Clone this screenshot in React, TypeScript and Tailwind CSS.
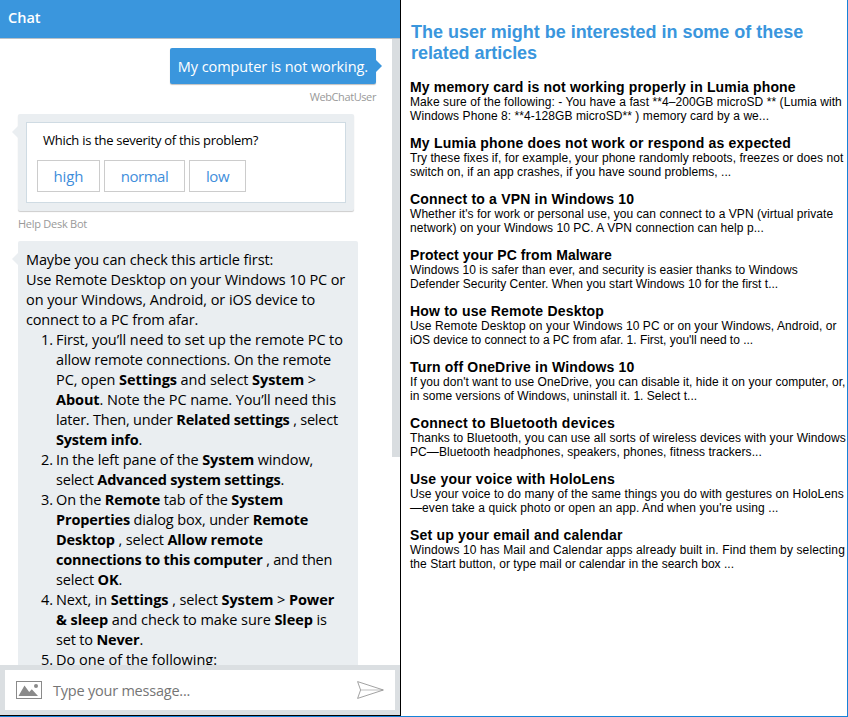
import type { ReactNode } from "react";

function Line({ t, children }: { t: string; children: ReactNode }) {
  return <div className={`whitespace-pre ${t}`}>{children}</div>;
}

function Step({ n, children }: { n: number; children: ReactNode }) {
  return (
    <li className="flex">
      <span className="w-[30px] shrink-0 pr-[3px] text-right">{n}.</span>
      <div>{children}</div>
    </li>
  );
}

const articles = [
  {
    title: "My memory card is not working properly in Lumia phone",
    track: "tracking-[0.16px]",
    lines: [
      ["Make sure of the following: - You have a fast **4–200GB microSD ** (Lumia with", "tracking-[0.08px]"],
      ["Windows Phone 8: **4-128GB microSD** ) memory card by a we...", "tracking-[0.07px]"],
    ],
  },
  {
    title: "My Lumia phone does not work or respond as expected",
    track: "tracking-[0.21px]",
    lines: [
      ["Try these fixes if, for example, your phone randomly reboots, freezes or does not", "tracking-[0.06px]"],
      ["switch on, if an app crashes, if you have sound problems, ...", "tracking-[0.05px]"],
    ],
  },
  {
    title: "Connect to a VPN in Windows 10",
    track: "tracking-[0.19px]",
    lines: [
      ["Whether it's for work or personal use, you can connect to a VPN (virtual private", "tracking-[0.05px]"],
      ["network) on your Windows 10 PC. A VPN connection can help p...", "tracking-[0.07px]"],
    ],
  },
  {
    title: "Protect your PC from Malware",
    track: "tracking-[0.07px]",
    lines: [
      ["Windows 10 is safer than ever, and security is easier thanks to Windows", "tracking-[0.06px]"],
      ["Defender Security Center. When you start Windows 10 for the first t...", "tracking-[0.01px]"],
    ],
  },
  {
    title: "How to use Remote Desktop",
    track: "tracking-[0.2px]",
    lines: [
      ["Use Remote Desktop on your Windows 10 PC or on your Windows, Android, or", "tracking-[0.09px]"],
      ["iOS device to connect to a PC from afar. 1. First, you'll need to ...", "tracking-[-0.02px]"],
    ],
  },
  {
    title: "Turn off OneDrive in Windows 10",
    track: "tracking-[0.18px]",
    lines: [
      ["If you don't want to use OneDrive, you can disable it, hide it on your computer, or,", "tracking-[0.05px]"],
      ["in some versions of Windows, uninstall it. 1. Select t...", "tracking-[0.03px]"],
    ],
  },
  {
    title: "Connect to Bluetooth devices",
    track: "tracking-[0.27px]",
    lines: [
      ["Thanks to Bluetooth, you can use all sorts of wireless devices with your Windows", "tracking-[0.07px]"],
      ["PC—Bluetooth headphones, speakers, phones, fitness trackers...", "tracking-[0.07px]"],
    ],
  },
  {
    title: "Use your voice with HoloLens",
    track: "tracking-[0.21px]",
    lines: [
      ["Use your voice to do many of the same things you do with gestures on HoloLens", "tracking-[0.08px]"],
      ["—even take a quick photo or open an app. And when you're using ...", "tracking-[0.08px]"],
    ],
  },
  {
    title: "Set up your email and calendar",
    track: "tracking-[0.19px]",
    lines: [
      ["Windows 10 has Mail and Calendar apps already built in. Find them by selecting", "tracking-[0.12px]"],
      ["the Start button, or type mail or calendar in the search box ...", "tracking-[0.03px]"],
    ],
  },
];

function ChatPanel() {
  return (
    <section className="flex w-[401px] shrink-0 flex-col border-r border-b border-black font-['Open_Sans',sans-serif]">
      <header className="flex h-[39px] shrink-0 items-center border-b border-[#b9c0c6] bg-[#3a96dd] px-2 pb-[2px] text-[14.5px] font-semibold text-white">
        Chat
      </header>

      <div className="flex min-h-0 flex-1 overflow-hidden">
        <div className="flex w-[392px] shrink-0 flex-col pt-[9px] pl-[18px] pr-4 text-[14.5px] leading-[20px]">
          <div className="relative self-end rounded-[2px] bg-[#3a96dd] px-2 pt-[9px] pb-[7px] whitespace-nowrap text-white tracking-[-0.09px] shadow-[0_1px_1px_rgba(0,0,0,0.25)]">
            My computer is not working.
            <svg className="absolute top-[12px] -right-[6px]" width="6" height="12" viewBox="0 0 6 12">
              <path d="M0 0L6 6L0 12Z" fill="#3a96dd" />
            </svg>
          </div>
          <div className="mt-[5px] self-end text-[11px] leading-[16px] tracking-[-0.4px] text-[#999]">WebChatUser</div>

          <div className="relative mt-[9px] h-[97px] w-[336px] shrink-0 rounded-[2px] bg-[#eaeef1] p-2 shadow-[0_1px_1px_rgba(0,0,0,0.2)]">
            <svg className="absolute top-[12px] -left-[6px]" width="6" height="12" viewBox="0 0 6 12">
              <path d="M6 0L0 6L6 12Z" fill="#eaeef1" />
            </svg>
            <div className="h-[81px] border border-[#cfdbe3] bg-white pt-[7px] pl-[10px]">
              <div className="pl-[6px] text-[13px] leading-[20px] tracking-[-0.28px] text-black">
                Which is the severity of this problem?
              </div>
              <div className="mt-[10px] flex gap-1 text-[15px] text-[#3f8edb]">
                <div className="flex h-8 w-[63px] items-center justify-center border border-[#ccc] tracking-[-0.08px]">high</div>
                <div className="flex h-8 w-[81px] items-center justify-center border border-[#ccc] tracking-[-0.5px]">normal</div>
                <div className="flex h-8 w-[57px] items-center justify-center border border-[#ccc] tracking-[-0.4px]">low</div>
              </div>
            </div>
          </div>
          <div className="mt-[5px] text-[11px] leading-[16px] tracking-[-0.26px] text-[#999]">Help Desk Bot</div>

          <div className="relative mt-[9px] h-[500px] w-[340px] shrink-0 rounded-[2px] bg-[#eaeef1] px-2 pt-[9px] text-black">
            <svg className="absolute top-[12px] -left-[6px]" width="6" height="12" viewBox="0 0 6 12">
              <path d="M6 0L0 6L6 12Z" fill="#eaeef1" />
            </svg>
            <Line t="tracking-[-0.12px]">Maybe you can check this article first:</Line>
            <Line t="tracking-[-0.1px]">Use Remote Desktop on your Windows 10 PC or</Line>
            <Line t="tracking-[-0.08px]">on your Windows, Android, or iOS device to</Line>
            <Line t="tracking-[-0.15px]">connect to a PC from afar.</Line>
            <ol>
              <Step n={1}>
                <Line t="tracking-[-0.09px]">First, you’ll need to set up the remote PC to</Line>
                <Line t="tracking-[-0.16px]">allow remote connections. On the remote</Line>
                <Line t="tracking-[-0.08px]">PC, open <b>Settings</b> and select <b>System</b> &gt;</Line>
                <Line t="tracking-[-0.09px]"><b>About</b>. Note the PC name. You’ll need this</Line>
                <Line t="tracking-[-0.22px]">later. Then, under <b>Related settings</b> , select</Line>
                <Line t="tracking-[-0.22px]"><b>System info</b>.</Line>
              </Step>
              <Step n={2}>
                <Line t="tracking-[-0.13px]">In the left pane of the <b>System</b> window,</Line>
                <Line t="tracking-[-0.2px]">select <b>Advanced system settings</b>.</Line>
              </Step>
              <Step n={3}>
                <Line t="tracking-[-0.15px]">On the <b>Remote</b> tab of the <b>System</b></Line>
                <Line t="tracking-[-0.15px]"><b>Properties</b> dialog box, under <b>Remote</b></Line>
                <Line t="tracking-[-0.15px]"><b>Desktop</b> , select <b>Allow remote</b></Line>
                <Line t="tracking-[-0.22px]"><b>connections to this computer</b> , and then</Line>
                <Line t="tracking-[-0.17px]">select <b>OK</b>.</Line>
              </Step>
              <Step n={4}>
                <Line t="tracking-[-0.1px]">Next, in <b>Settings</b> , select <b>System</b> &gt; <b>Power</b></Line>
                <Line t="tracking-[-0.07px]"><b>&amp; sleep</b> and check to make sure <b>Sleep</b> is</Line>
                <Line t="tracking-[-0.17px]">set to <b>Never</b>.</Line>
              </Step>
              <Step n={5}>
                <Line t="tracking-[0px]">Do one of the following:</Line>
              </Step>
            </ol>
          </div>
        </div>
        <div className="h-[418px] w-2 bg-[#d9dde0]" />
      </div>

      <footer className="h-[50px] shrink-0 bg-[#dbdfe2] p-[5px]">
        <div className="flex h-10 items-center bg-white pr-[11px] pl-[11px]">
          <svg width="26" height="18" viewBox="0 0 26 18">
            <rect x="0.5" y="0.5" width="25" height="17" fill="none" stroke="#8a8a8a" />
            <path d="M2.5 15L8.5 4.5L13.2 11L15.8 8.3L22 15Z" fill="#8a8a8a" />
            <circle cx="20" cy="5" r="2" fill="#8a8a8a" />
          </svg>
          <span className="ml-[11px] flex-1 pt-[2px] text-[14.5px] tracking-[-0.22px] text-[#757575]">Type your message...</span>
          <svg width="27" height="18" viewBox="0 0 27 18" fill="none" strokeLinejoin="round">
            <path d="M4 9H26" stroke="#dcdcdc" strokeWidth="1.8" />
            <path d="M0.6 0.6L26.4 9L0.6 17.4L3.6 9Z" stroke="#8a8a8a" strokeWidth="0.8" />
          </svg>
        </div>
      </footer>
    </section>
  );
}

export default function App() {
  return (
    <div className="h-[717px] w-[848px] overflow-hidden border-b border-[#1683d8] bg-white">
      <div className="flex h-full">
        <ChatPanel />
        <section className="min-w-0 flex-1 overflow-hidden border-r border-[#1683d8] pt-[22px] pl-[9px] font-['Liberation_Sans',Arial,sans-serif] whitespace-nowrap text-black">
          <h2 className="pl-px text-[18px] leading-[21px] font-bold text-[#3a96dd]">
            <Line t="tracking-[-0.02px]">The user might be interested in some of these</Line>
            <Line t="tracking-[-0.07px]">related articles</Line>
          </h2>
          <div className="mt-[15px] flex flex-col gap-3">
            {articles.map((a) => (
              <article key={a.title}>
                <h3 className={`text-[14px] leading-[16px] font-bold ${a.track}`}>{a.title}</h3>
                <div className="text-[12px] leading-[14px]">
                  {a.lines.map(([text, t]) => (
                    <Line key={text} t={t}>{text}</Line>
                  ))}
                </div>
              </article>
            ))}
          </div>
        </section>
      </div>
    </div>
  );
}
